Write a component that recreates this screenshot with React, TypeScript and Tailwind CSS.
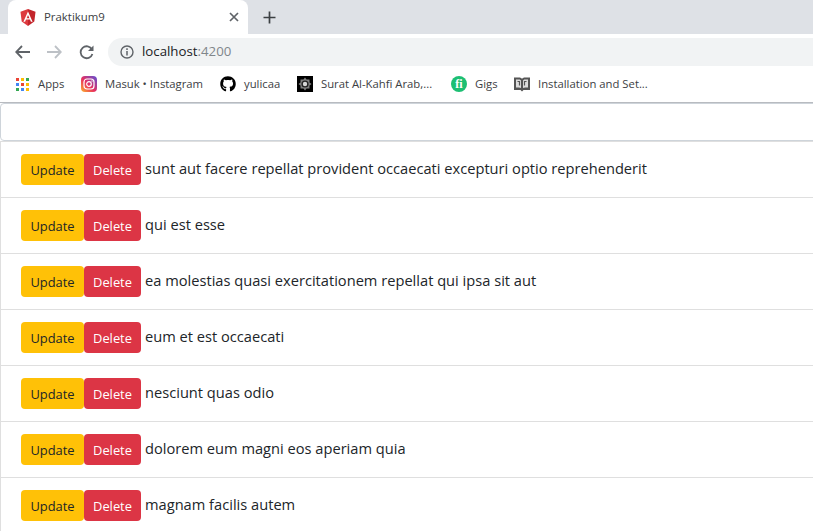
import { FaGithub } from "react-icons/fa";

const posts = [
  "sunt aut facere repellat provident occaecati excepturi optio reprehenderit",
  "qui est esse",
  "ea molestias quasi exercitationem repellat qui ipsa sit aut",
  "eum et est occaecati",
  "nesciunt quas odio",
  "dolorem eum magni eos aperiam quia",
  "magnam facilis autem",
];

const AngularIcon = () => (
  <svg width="16" height="17" viewBox="0 0 16 17">
    <path d="M8 0 L0.5 2.7 L1.7 12.6 L8 17 Z" fill="#dd3a3f" />
    <path d="M8 0 L15.5 2.7 L14.3 12.6 L8 17 Z" fill="#c3252b" />
    <path d="M8 2.5 L3.4 12.8 H5.1 L6 10.5 H10 L10.9 12.8 H12.6 Z M8 6 L9.4 9.2 H6.6 Z" fill="#fff" fillRule="evenodd" />
  </svg>
);

const AppsIcon = () => {
  const colors = ["#ea4335", "#fbbc05", "#34a853", "#4285f4", "#ea4335", "#fbbc05", "#34a853", "#4285f4", "#fbbc05"];
  return (
    <div className="grid grid-cols-3 gap-[2px] w-[13px] h-[13px]">
      {colors.map((c, i) => (
        <svg key={i} width="3" height="3" viewBox="0 0 3 3">
          <rect width="3" height="3" fill={c} />
        </svg>
      ))}
    </div>
  );
};

const InstagramIcon = () => (
  <svg width="16" height="16" viewBox="0 0 16 16">
    <defs>
      <linearGradient id="ig" x1="0" y1="1" x2="1" y2="0">
        <stop offset="0" stopColor="#fdb42c" />
        <stop offset="0.45" stopColor="#e8305f" />
        <stop offset="1" stopColor="#5b51d8" />
      </linearGradient>
    </defs>
    <rect width="16" height="16" rx="4" fill="url(#ig)" />
    <rect x="3" y="3" width="10" height="10" rx="3" fill="none" stroke="#fff" strokeWidth="1.2" />
    <circle cx="8" cy="8" r="2.3" fill="none" stroke="#fff" strokeWidth="1.2" />
    <circle cx="11" cy="5" r="0.7" fill="#fff" />
  </svg>
);

const KahfiIcon = () => (
  <svg width="16" height="16" viewBox="0 0 16 16">
    <rect width="16" height="16" fill="#000" />
    <path d="M8 1.5 L9.5 3.5 L12.5 3.5 L12.5 6.5 L14.5 8 L12.5 9.5 L12.5 12.5 L9.5 12.5 L8 14.5 L6.5 12.5 L3.5 12.5 L3.5 9.5 L1.5 8 L3.5 6.5 L3.5 3.5 L6.5 3.5 Z" fill="#808080" />
    <circle cx="8" cy="8" r="3.6" fill="#222" />
    <circle cx="8" cy="8" r="2.2" fill="#d8d8d8" />
  </svg>
);

const GigsIcon = () => (
  <div className="w-[16px] h-[16px] rounded-full bg-[#1dbf73] flex items-center justify-center text-white text-[12px] font-bold font-['Liberation_Serif',serif] leading-none">
    fi
  </div>
);

const BookIcon = () => (
  <svg width="16" height="15" viewBox="0 0 16 15">
    <path d="M0 0.5 H5 C6.5 0.5 7.5 1 8 2 C8.5 1 9.5 0.5 11 0.5 H16 V13 H9.5 L8 14.5 L6.5 13 H0 Z" fill="#555" />
    <path d="M2 2.5 H5 C6 2.5 7 3 7 4 V11 C6 10.5 4 10.5 2 10.5 Z M14 2.5 H11 C10 2.5 9 3 9 4 V11 C10 10.5 12 10.5 14 10.5 Z" fill="#ddd" />
    <path d="M3.5 4.5 H5.5 V8.5 M12.5 4.5 H10.5 V8.5" fill="none" stroke="#555" strokeWidth="1.2" />
  </svg>
);

const Bookmark = ({ icon, label, width }: { icon: React.ReactNode; label: string; width: string }) => (
  <div className={`flex items-center gap-2 ${width}`}>
    <div className="w-4 flex items-center justify-center shrink-0">{icon}</div>
    <span className="whitespace-nowrap text-[11.3px] text-[#3c4043]">{label}</span>
  </div>
);

export default function App() {
  return (
    <div className="w-[813px] h-[531px] overflow-hidden bg-white font-['Open_Sans','Noto_Sans',sans-serif]">
      {/* Tab strip */}
      <div className="h-[34px] bg-[#dee1e6] flex items-end pl-2">
        <div className="w-[240px] h-[34px] bg-white rounded-t-lg flex items-center pl-3 pr-[9px]">
          <AngularIcon />
          <span className="ml-2 text-[11.4px] text-[#3c4043]">Praktikum9</span>
          <svg className="ml-auto" width="10" height="10" viewBox="0 0 10 10">
            <path d="M1 1 L9 9 M9 1 L1 9" stroke="#5f6368" strokeWidth="1.7" />
          </svg>
        </div>
        <div className="h-[34px] flex items-center pl-[15px]">
          <svg width="13" height="13" viewBox="0 0 13 13">
            <path d="M6.5 0.5 V12.5 M0.5 6.5 H12.5" stroke="#3c4043" strokeWidth="1.7" />
          </svg>
        </div>
      </div>

      {/* Toolbar */}
      <div className="h-[34px] bg-white flex items-center pl-[15px] pt-[2px]">
        <svg width="15" height="14" viewBox="0 0 15 14">
          <path d="M7 1 L1.2 7 L7 13 M1.2 7 H15" fill="none" stroke="#5f6368" strokeWidth="1.8" />
        </svg>
        <svg className="ml-[17px]" width="15" height="14" viewBox="0 0 15 14">
          <path d="M8 1 L13.8 7 L8 13 M13.8 7 H0" fill="none" stroke="#bdc1c6" strokeWidth="1.8" />
        </svg>
        <svg className="ml-[17px]" width="15" height="15" viewBox="0 0 15 15">
          <path d="M13 4.5 A6 6 0 1 0 13.4 9" fill="none" stroke="#5f6368" strokeWidth="1.8" />
          <path d="M14.5 0.5 V6 H9 Z" fill="#5f6368" />
        </svg>
        <div className="ml-[14px] flex-1 h-[28px] bg-[#f1f3f4] rounded-l-full flex items-center pl-[12px]">
          <svg width="14" height="14" viewBox="0 0 14 14">
            <circle cx="7" cy="7" r="6" fill="none" stroke="#5f6368" strokeWidth="1.4" />
            <path d="M7 6 V10.5 M7 3.3 V4.9" stroke="#5f6368" strokeWidth="1.5" />
          </svg>
          <span className="ml-2 text-[13.25px] text-[#202124]">
            localhost<span className="text-[#80868b]">:4200</span>
          </span>
        </div>
      </div>

      {/* Bookmarks bar */}
      <div className="h-[35px] bg-white border-b border-[#b8bbc0] flex items-center pl-[14px] pb-[2px]">
        <Bookmark icon={<AppsIcon />} label="Apps" width="w-[67px]" />
        <Bookmark icon={<InstagramIcon />} label="Masuk • Instagram" width="w-[139px]" />
        <Bookmark icon={<FaGithub className="text-[16px] text-black" />} label="yulicaa" width="w-[77px]" />
        <Bookmark icon={<KahfiIcon />} label="Surat Al-Kahfi Arab,..." width="w-[154px]" />
        <Bookmark icon={<GigsIcon />} label="Gigs" width="w-[63px]" />
        <Bookmark icon={<BookIcon />} label="Installation and Set..." width="w-auto" />
      </div>

      {/* Page */}
      <div className="w-[840px]">
        <div className="h-[38px] border border-[#ced4da] rounded-[4px] bg-white" />
        <ul className="border-t border-[#dfdfdf]">
          {posts.map((title) => (
            <li
              key={title}
              className="h-[56px] border-l border-b border-[#dfdfdf] pl-5 flex items-center text-[14.65px] text-[#212529]"
            >
              <button className="w-[63px] h-[31px] pt-[2px] bg-[#ffc107] rounded-[4px] text-[12.9px] text-[#212529]">Update</button>
              <button className="w-[57px] h-[31px] pt-[2px] bg-[#dc3545] rounded-[4px] text-[12.9px] text-white">Delete</button>
              <span className="ml-1 pb-[2px] whitespace-nowrap">{title}</span>
            </li>
          ))}
        </ul>
      </div>
    </div>
  );
}
